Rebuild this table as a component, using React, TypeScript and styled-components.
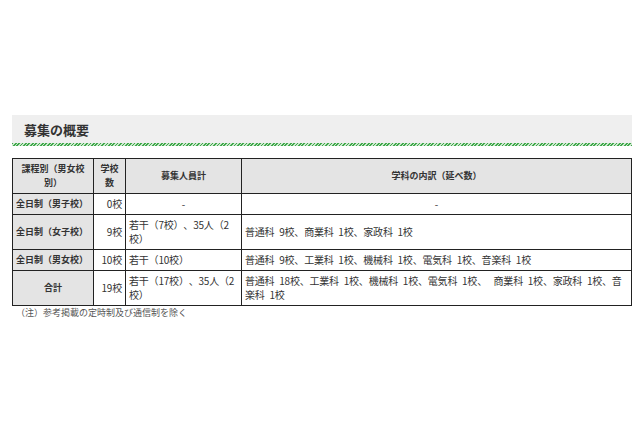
import React from "react";
import styled, { createGlobalStyle } from "styled-components";

const Global = createGlobalStyle`
  html, body { margin: 0; padding: 0; background: #fff; }
  body {
    font-family: "Noto Sans CJK JP", "Noto Sans", sans-serif;
    color: #333;
    text-spacing-trim: space-all;
  }
`;

const Page = styled.div`
  padding: 115px 8px 0 12px;
  width: 620px;
`;

const Heading = styled.h2`
  margin: 0;
  height: 28px;
  display: flex;
  align-items: center;
  padding-left: 12px;
  background: #efefef;
  font-size: 13px;
  font-weight: bold;
  color: #333;
`;

const Stripe = styled.div`
  height: 3px;
  background: repeating-linear-gradient(
    135deg,
    #3fa84a 0px,
    #3fa84a 1.2px,
    #cde8cf 1.2px,
    #cde8cf 2.4px
  );
`;

const Table = styled.table`
  margin-top: 12px;
  width: 620px;
  border-collapse: collapse;
  table-layout: fixed;
  line-height: 14px;
  border: 1px solid #222;
`;

const Th = styled.th<{ $align?: string }>`
  border: 1px solid #222;
  background: #e4e4e4;
  padding: 3px 3px;
  font-size: 9px;
  font-weight: bold;
  text-align: ${(p) => p.$align || "center"};
  color: #333;
`;

const Td = styled.td<{ $align?: string }>`
  border: 1px solid #222;
  padding: 3px 3px;
  background: #fff;
  font-size: 10px;
  letter-spacing: -0.2px;
  text-align: ${(p) => p.$align || "left"};
  color: #333;
  vertical-align: middle;
  line-break: anywhere;
`;

const Note = styled.p`
  margin: 1px 0 0 4px;
  font-size: 9px;
  line-height: 12px;
  color: #555;
`;

const S = "\u2002";
const T = "\u2009";

const rows = [
  { name: "全日制（男子校）", align: "left", n: "0校", total: "-", totalCenter: true, detail: "-", detailCenter: true },
  { name: "全日制（女子校）", align: "left", n: "9校", total: "若干（7校）、35人（2校）", detail: `普通科${S}9校、商業科${S}1校、家政科${S}1校` },
  { name: "全日制（男女校）", align: "left", n: "10校", total: "若干（10校）", detail: `普通科${S}9校、工業科${S}1校、機械科${S}1校、電気科${S}1校、音楽科${S}1校` },
  { name: "合計", align: "center", n: "19校", total: "若干（17校）、35人（2校）", detail: `普通科${S}18校、工業科${S}1校、機械科${S}1校、電気科${S}1校、${S}${T}商業科${S}1校、家政科${S}1校、音楽科${S}1校` },
];

export default function App() {
  return (
    <>
      <Global />
      <Page>
        <Heading>募集の概要</Heading>
        <Stripe />
        <Table>
          <colgroup>
            <col style={{ width: 81 }} />
            <col style={{ width: 32 }} />
            <col style={{ width: 116 }} />
            <col />
          </colgroup>
          <thead>
            <tr>
              <Th>課程別（男女校別）</Th>
              <Th>学校数</Th>
              <Th>募集人員計</Th>
              <Th>学科の内訳（延べ数）</Th>
            </tr>
          </thead>
          <tbody>
            {rows.map((r) => (
              <tr key={r.name}>
                <Th $align={r.align}>{r.name}</Th>
                <Td $align="right">{r.n}</Td>
                <Td $align={r.totalCenter ? "center" : "left"}>{r.total}</Td>
                <Td $align={r.detailCenter ? "center" : "left"}>{r.detail}</Td>
              </tr>
            ))}
          </tbody>
        </Table>
        <Note>（注）参考掲載の定時制及び通信制を除く</Note>
      </Page>
    </>
  );
}
